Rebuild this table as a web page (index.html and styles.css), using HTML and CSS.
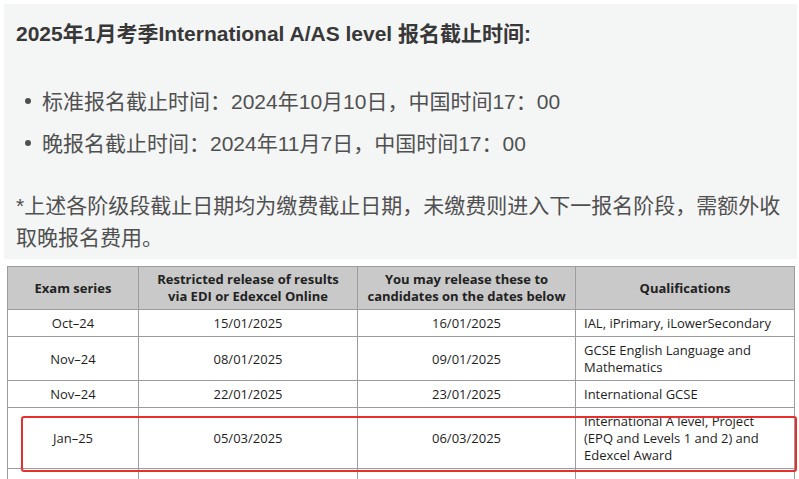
FILE: index.html
```html
<!DOCTYPE html>
<html lang="zh-CN">
<head>
<meta charset="utf-8">
<title>2025年1月考季 报名截止时间</title>
<link rel="stylesheet" href="styles.css">
</head>
<body>
<section class="note">
  <h2 class="note-title">2025年1月考季International A/AS level 报名截止时间:</h2>
  <ul class="deadlines">
    <li>标准报名截止时间：2024年10月10日，中国时间17：00</li>
    <li>晚报名截止时间：2024年11月7日，中国时间17：00</li>
  </ul>
  <p class="remark">*上述各阶级段截止日期均为缴费截止日期，未缴费则进入下一报名阶段，需额外收取晚报名费用。</p>
</section>
<div class="table-wrap">
  <table class="results">
    <colgroup>
      <col class="c1"><col class="c2"><col class="c3"><col class="c4">
    </colgroup>
    <thead>
      <tr>
        <th>Exam series</th>
        <th>Restricted release of results<br>via EDI or Edexcel Online</th>
        <th>You may release these to<br>candidates on the dates below</th>
        <th>Qualifications</th>
      </tr>
    </thead>
    <tbody>
      <tr><td>Oct–24</td><td>15/01/2025</td><td>16/01/2025</td><td class="qual">IAL, iPrimary, iLowerSecondary</td></tr>
      <tr><td>Nov–24</td><td>08/01/2025</td><td>09/01/2025</td><td class="qual">GCSE English Language and Mathematics</td></tr>
      <tr><td>Nov–24</td><td>22/01/2025</td><td>23/01/2025</td><td class="qual">International GCSE</td></tr>
      <tr><td>Jan–25</td><td>05/03/2025</td><td>06/03/2025</td><td class="qual">International A level, Project (EPQ and Levels 1 and 2) and Edexcel Award</td></tr>
      <tr><td>&nbsp;</td><td></td><td></td><td class="qual"></td></tr>
    </tbody>
  </table>
  <div class="highlight"></div>
</div>
</body>
</html>
```
FILE: styles.css
```css
html, body {
  margin: 0;
  padding: 0;
  background: #ffffff;
  overflow: hidden;
}

body {
  font-family: "Liberation Sans", "Noto Sans CJK SC", sans-serif;
  color: #505050;
}

.note {
  margin: 4px 2px 0 4px;
  padding: 15px 12px 5px;
  background: #f4f5f5;
}

.note-title {
  margin: 0;
  font-size: 21px;
  line-height: 30px;
  font-weight: bold;
  color: #383838;
}

.deadlines {
  list-style: none;
  margin: 32px 0 0;
  padding: 0 0 0 26px;
}

.deadlines li {
  font-size: 21px;
  line-height: 42px;
}

.deadlines li::before {
  content: "";
  display: inline-block;
  width: 6px;
  height: 6px;
  border-radius: 50%;
  background: #505050;
  margin-left: -17px;
  margin-right: 11px;
  vertical-align: middle;
  position: relative;
  top: -2px;
}

.remark {
  margin: 25px 0 0;
  font-size: 21px;
  line-height: 32px;
}

.table-wrap {
  position: relative;
  margin: 7px 0 0 7px;
  width: 787px;
}

.results {
  border-collapse: collapse;
  table-layout: fixed;
  width: 787px;
  font-family: "Open Sans", "Liberation Sans", sans-serif;
  font-size: 13px;
  line-height: 17px;
  color: #1e1e1e;
}

.c1 { width: 131px; }
.c2 { width: 219px; }
.c3 { width: 218px; }
.c4 { width: 219px; }

.results th,
.results td {
  border: 1px solid #9c9c9c;
  padding: 5px 8px 4px;
  text-align: center;
  vertical-align: middle;
}

.results th {
  background: #c9c9c9;
  font-weight: 700;
  color: #222;
  padding: 4px 8px 4px;
}

.results td.qual {
  text-align: left;
}

.highlight {
  position: absolute;
  left: 14px;
  top: 150px;
  width: 772px;
  height: 52px;
  border: 2px solid #e5302c;
  border-radius: 3px;
}
```
